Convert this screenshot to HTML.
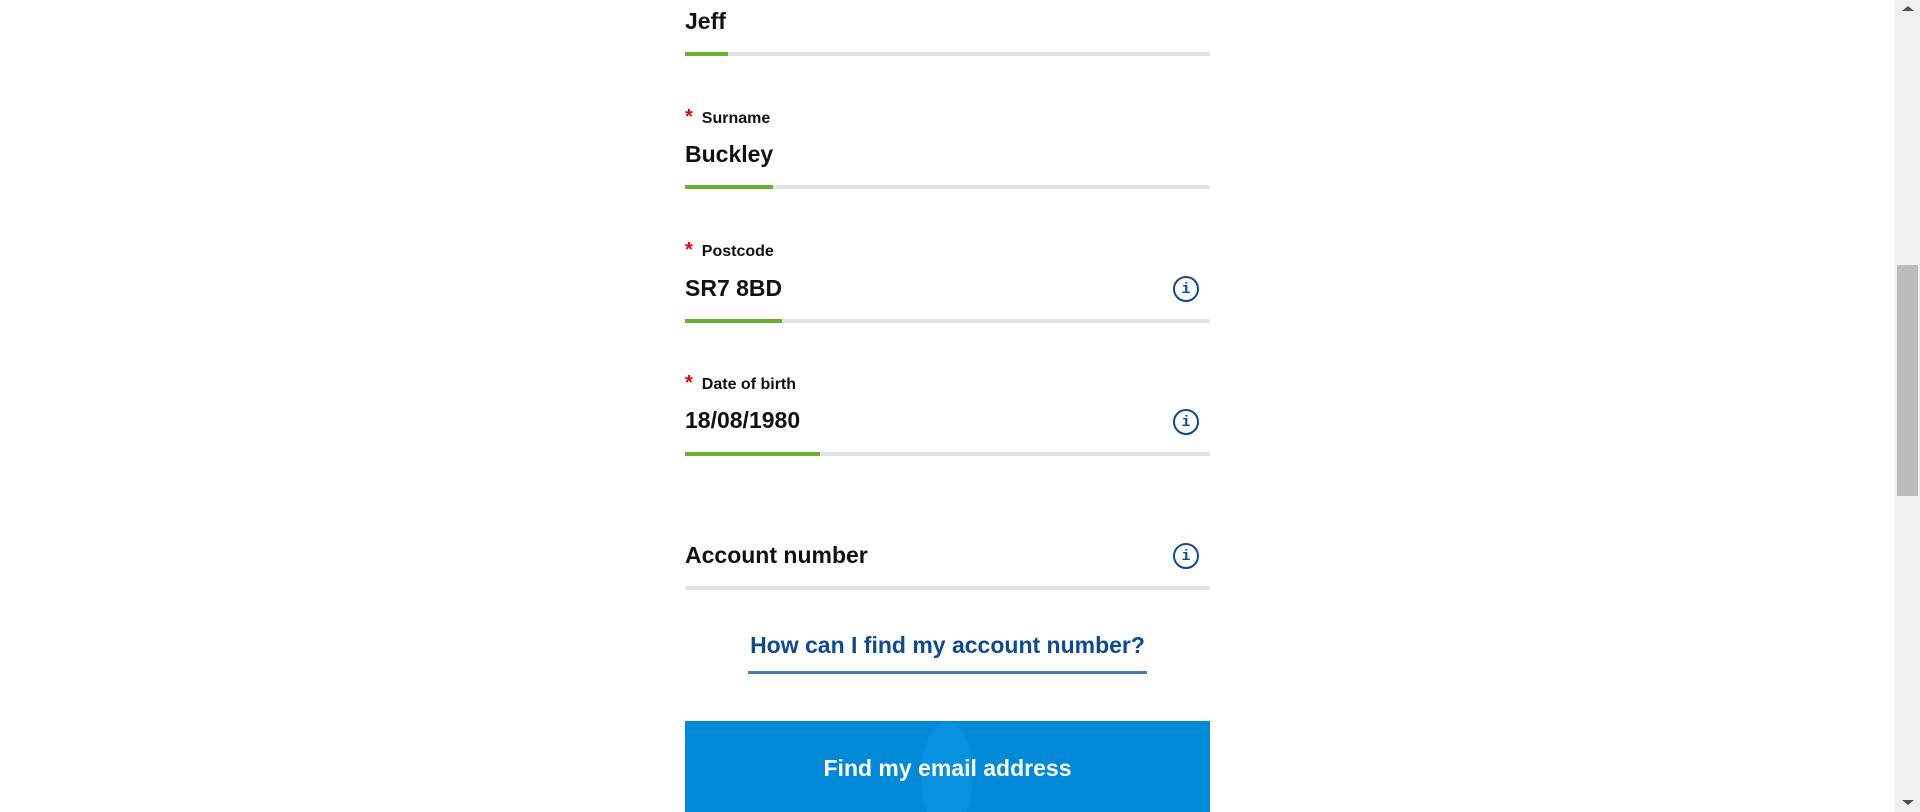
<!DOCTYPE html>
<html><head><meta charset="utf-8"><style>
html,body{margin:0;padding:0;width:1920px;height:812px;overflow:hidden;background:#fff;font-family:"Liberation Sans",sans-serif;}
.a{position:absolute;}
.val{position:absolute;left:685px;font-size:23px;font-weight:bold;color:#111;line-height:28px;}
.lab{position:absolute;left:685px;font-size:16px;font-weight:bold;color:#111;line-height:20px;}
.lab span{color:#e00;font-size:20px;margin-right:9px;}
.bar{position:absolute;left:685px;width:525px;height:4px;background:#e3e3e3;}
.bar i{display:block;height:4px;background:#65b32e;}
.ic{position:absolute;left:1173px;width:26px;height:26px;border:2px solid #0d4a8f;border-radius:50%;box-sizing:border-box;color:#0d4a8f;font:bold 15px "Liberation Mono",monospace;text-align:center;line-height:23px;}
</style></head><body>
<div class="val" style="top:7px">Jeff</div>
<div class="bar" style="top:52px"><i style="width:43px"></i></div>

<div class="lab" style="top:107px"><span>*</span>Surname</div>
<div class="val" style="top:140px">Buckley</div>
<div class="bar" style="top:185px"><i style="width:88px"></i></div>

<div class="lab" style="top:240px"><span>*</span>Postcode</div>
<div class="val" style="top:274px">SR7 8BD</div>
<div class="ic" style="top:276px">i</div>
<div class="bar" style="top:319px"><i style="width:97px"></i></div>

<div class="lab" style="top:373px"><span>*</span>Date of birth</div>
<div class="val" style="top:406px">18/08/1980</div>
<div class="ic" style="top:409px">i</div>
<div class="bar" style="top:452px"><i style="width:135px"></i></div>

<div class="val" style="top:541px">Account number</div>
<div class="ic" style="top:543px">i</div>
<div class="bar" style="top:586px"></div>

<div class="a" style="left:748px;width:399px;top:630px;text-align:center;font-size:23px;font-weight:bold;color:#0d4a8f;line-height:30px;">How can I find my account number?</div>
<div class="a" style="left:748px;width:399px;top:671px;height:3px;background:#4a7ab6;"></div>

<div class="a" style="left:685px;top:721px;width:525px;height:91px;background:#0089d6;overflow:hidden;">
<div class="a" style="left:236px;top:0;width:52px;height:110px;border-radius:50%;background:#0791e0;"></div>
<div class="a" style="left:0;width:525px;top:32px;text-align:center;color:#fff;font-size:23px;font-weight:bold;line-height:30px;">Find my email address</div>
</div>

<div class="a" style="left:1895px;top:0;width:25px;height:812px;background:#f0f0f0;"></div>
<div class="a" style="left:1897px;top:265px;width:21px;height:231px;background:#bcbcbc;"></div>
<div class="a" style="left:1902px;top:6px;width:0;height:0;border-left:6px solid transparent;border-right:6px solid transparent;border-bottom:5px solid #505050;"></div>
<div class="a" style="left:1902px;top:800px;width:0;height:0;border-left:6px solid transparent;border-right:6px solid transparent;border-top:5px solid #505050;"></div>
</body></html>
